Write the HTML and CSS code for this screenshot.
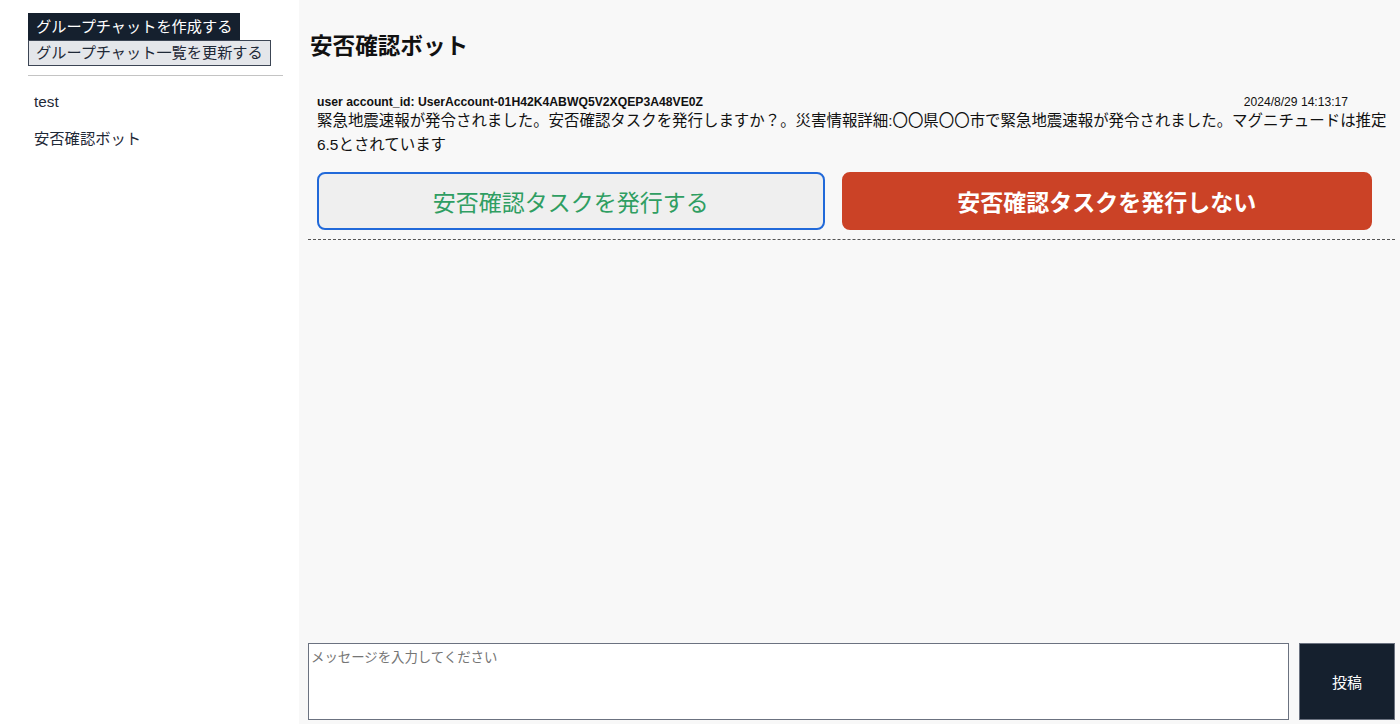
FILE: index.html
```html
<!DOCTYPE html>
<html lang="ja">
<head>
	<meta charset="UTF-8">
	<meta name="viewport" content="width=device-width, initial-scale=1.0">
	<title>安否確認ボット</title>
	<link rel="stylesheet" href="styles.css">
</head>
<body>
	<div class="app">
		<div class="sidebar">
			<button class="btnCreate">グループチャットを作成する</button>
			<button class="btnReload">グループチャット一覧を更新する</button>
			<hr class="line">
			<ul class="roomList">
				<li>test</li>
				<li>安否確認ボット</li>
			</ul>
		</div>
		<div class="main">
			<h2 class="roomTitle">安否確認ボット</h2>
			<div class="messages">
				<div class="message">
					<div class="msgHead">
						<span class="msgUser">user account_id: UserAccount-01H42K4ABWQ5V2XQEP3A48VE0Z</span>
						<span class="msgTime">2024/8/29 14:13:17</span>
					</div>
					<p class="msgText">緊急地震速報が発令されました。安否確認タスクを発行しますか？。災害情報詳細:〇〇県〇〇市で緊急地震速報が発令されました。マグニチュードは推定6.5とされています</p>
					<div class="msgActions">
						<button class="btnYes">安否確認タスクを発行する</button>
						<button class="btnNo">安否確認タスクを発行しない</button>
					</div>
				</div>
			</div>
			<div class="postForm">
				<textarea class="postInput" placeholder="メッセージを入力してください"></textarea>
				<button class="btnPost">投稿</button>
			</div>
		</div>
	</div>
</body>
</html>
```

FILE: styles.css
```css
*{
	padding: 0;
	margin: 0;
	box-sizing: border-box;
}
body{
	font-family: "Liberation Sans", "Noto Sans CJK JP", sans-serif;
	color: #111;
}
button,textarea{
	font-family: inherit;
}
.app{
	display: flex;
	height: 100vh;
}
.sidebar{
	width: 299px;
	flex-shrink: 0;
	background-color: #fff;
	padding: 13px 16px 0 28px;
}
.btnCreate,.btnReload{
	display: block;
	font-size: 15.2px;
	padding: 0 7px;
	border: 1px solid #15202e;
	cursor: pointer;
}
.btnCreate{
	height: 27px;
	line-height: 25px;
	background-color: #15202e;
	color: #fff;
}
.btnReload{
	height: 26px;
	line-height: 24px;
	background-color: #e4e6ea;
	color: #1f2937;
	border-color: #3c4554;
}
.line{
	border: 0;
	border-top: 1px solid #c4c4c4;
	margin-top: 9px;
}
.roomList{
	list-style: none;
	margin-top: 7px;
}
.roomList li{
	height: 37px;
	line-height: 37px;
	padding-left: 6px;
	font-size: 15.3px;
	color: #1f2937;
	cursor: pointer;
}
.main{
	flex: 1;
	display: flex;
	flex-direction: column;
	background-color: #f8f8f8;
	padding: 0 5px 4px 9px;
	min-width: 0;
}
.roomTitle{
	font-size: 22.6px;
	line-height: 34px;
	margin: 30px 0 24px;
	padding-left: 2px;
	font-weight: bold;
}
.messages{
	flex: 1;
}
.message{
	padding: 7px 8px 9px 9px;
	border-bottom: 1px dashed #555;
}
.msgHead{
	display: flex;
	justify-content: space-between;
	align-items: center;
	height: 14px;
	padding-right: 39px;
}
.msgUser{
	font-size: 12.2px;
	font-weight: bold;
}
.msgTime{
	font-size: 12.1px;
}
.msgText{
	font-size: 15.45px;
	line-height: 24px;
}
.msgActions{
	display: flex;
	gap: 17px;
	margin-top: 15px;
	padding-right: 15px;
}
.msgActions button{
	flex: 1 1 auto;
	height: 58px;
	font-size: 23px;
	border-radius: 8px;
	cursor: pointer;
}
.btnYes{
	background-color: #efefef;
	border: 2px solid #2169d9;
	color: #2f9e62;
}
.btnNo{
	background-color: #cb4226;
	border: 2px solid #cb4226;
	color: #fff;
	font-weight: bold;
}
.postForm{
	display: flex;
	gap: 10px;
	height: 77px;
}
.postInput{
	flex: 1;
	resize: none;
	border: 1px solid #6b7280;
	background-color: #fff;
	padding: 4px 2px;
	font-size: 13.4px;
	line-height: 20px;
}
.postInput::placeholder{
	color: #757575;
}
.btnPost{
	width: 96px;
	background-color: #15202e;
	color: #fff;
	border: 1px solid #6b7280;
	font-size: 15px;
	cursor: pointer;
}
```
